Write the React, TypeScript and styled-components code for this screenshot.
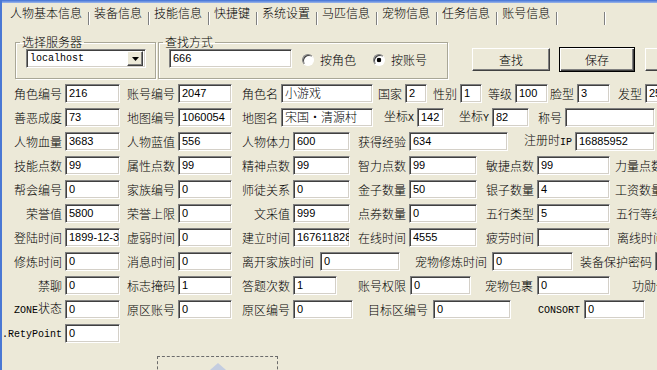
import React from 'react';
import styled, { createGlobalStyle } from 'styled-components';

const cjkFont = `"Noto Sans CJK SC", "Noto Sans", sans-serif`;
const monoFont = `"Liberation Mono", "Noto Sans CJK SC", monospace`;
const sansFont = `"Liberation Sans", "Noto Sans CJK SC", sans-serif`;

const GlobalStyle = createGlobalStyle`
    html, body {
        margin: 0;
        padding: 0;
        background: #ece9d8;
        overflow: hidden;
    }

    * {
        box-sizing: border-box;
    }
`;

type CellType = {
    label: React.ReactNode
    value?: string
    lw: number
    fw: number
    pad?: number
    cjk?: boolean
}

const Mono = styled.span`
    font-family: ${monoFont};
    font-size: 10px;
    font-weight: 400;
`;

const rows: CellType[][] = [
    [
        {label: '角色编号', value: '216', lw: 63, fw: 55},
        {label: '账号编号', value: '2047', lw: 58, fw: 54},
        {label: '角色名', value: '小游戏', lw: 49, fw: 92, cjk: true},
        {label: '国家', value: '2', lw: 32, fw: 22},
        {label: '性别', value: '1', lw: 33, fw: 22},
        {label: '等级', value: '100', lw: 33, fw: 33},
        {label: '脸型', value: '3', lw: 29, fw: 33},
        {label: '发型', value: '25', lw: 35, fw: 55},
    ],
    [
        {label: '善恶成度', value: '73', lw: 63, fw: 55},
        {label: '地图编号', value: '1060054', lw: 58, fw: 54},
        {label: '地图名', value: '宋国•清源村', lw: 49, fw: 92, cjk: true},
        {label: <>坐标<Mono>X</Mono></>, value: '142', lw: 44, fw: 27},
        {label: <>坐标<Mono>Y</Mono></>, value: '82', lw: 48, fw: 37},
        {label: '称号', value: '', lw: 36, fw: 90},
    ],
    [
        {label: '人物血量', value: '3683', lw: 63, fw: 55},
        {label: '人物蓝值', value: '556', lw: 58, fw: 54},
        {label: '人物体力', value: '600', lw: 61, fw: 57},
        {label: '获得经验', value: '634', lw: 59, fw: 99},
        {label: <>注册时<Mono>IP</Mono></>, value: '16885952', lw: 67, fw: 80},
    ],
    [
        {label: '技能点数', value: '99', lw: 63, fw: 55},
        {label: '属性点数', value: '99', lw: 58, fw: 54},
        {label: '精神点数', value: '99', lw: 61, fw: 57},
        {label: '智力点数', value: '99', lw: 59, fw: 68},
        {label: '敏捷点数', value: '99', lw: 60, fw: 73},
        {label: '力量点数', value: '99', lw: 56, fw: 60},
    ],
    [
        {label: '帮会编号', value: '0', lw: 63, fw: 55},
        {label: '家族编号', value: '0', lw: 58, fw: 54},
        {label: '师徒关系', value: '0', lw: 61, fw: 57},
        {label: '金子数量', value: '50', lw: 59, fw: 68},
        {label: '银子数量', value: '4', lw: 60, fw: 73},
        {label: '工资数量', value: '0', lw: 56, fw: 60},
    ],
    [
        {label: '荣誉值', value: '5800', lw: 63, fw: 55},
        {label: '荣誉上限', value: '0', lw: 58, fw: 54},
        {label: '文采值', value: '999', lw: 61, fw: 57},
        {label: '点券数量', value: '0', lw: 59, fw: 68},
        {label: '五行类型', value: '5', lw: 60, fw: 73},
        {label: '五行等级', value: '0', lw: 57, fw: 60},
    ],
    [
        {label: '登陆时间', value: '1899-12-30', lw: 63, fw: 55},
        {label: '虚弱时间', value: '0', lw: 58, fw: 54},
        {label: '建立时间', value: '1676118282', lw: 61, fw: 57},
        {label: '在线时间', value: '4555', lw: 59, fw: 68},
        {label: '疲劳时间', value: '', lw: 60, fw: 73},
        {label: '离线时间', value: '', lw: 58, fw: 60},
    ],
    [
        {label: '修炼时间', value: '0', lw: 63, fw: 55},
        {label: '消息时间', value: '0', lw: 58, fw: 54},
        {label: '离开家族时间', value: '0', lw: 88, fw: 80, pad: 6},
        {label: '宠物修炼时间', value: '0', lw: 92, fw: 81, pad: 5},
        {label: '装备保护密码', value: '', lw: 82, fw: 60},
    ],
    [
        {label: '禁聊', value: '0', lw: 63, fw: 55},
        {label: '标志掩码', value: '1', lw: 58, fw: 54},
        {label: '答题次数', value: '1', lw: 61, fw: 44},
        {label: '账号权限', value: '0', lw: 73, fw: 61, pad: 4},
        {label: '宠物包裹', value: '0', lw: 66, fw: 73, pad: 4},
        {label: '功勋值', value: '', lw: 61, fw: 60},
    ],
    [
        {label: <><Mono>ZONE</Mono>状态</>, value: '0', lw: 63, fw: 55},
        {label: '原区账号', value: '0', lw: 58, fw: 54},
        {label: '原区编号', value: '0', lw: 61, fw: 60},
        {label: '目标区编号', value: '0', lw: 80, fw: 78, pad: 5},
        {label: <Mono>CONSORT</Mono>, value: '0', lw: 73, fw: 61, pad: 4},
    ],
    [
        {label: <Mono>.RetyPoint</Mono>, value: '0', lw: 63, fw: 55},
    ],
];

const tabs = ['人物基本信息', '装备信息', '技能信息', '快捷键', '系统设置', '马匹信息', '宠物信息', '任务信息', '账号信息', ''];

export default function App() {
    return (
        <>
            <GlobalStyle/>
            <Window>
                <TitleEdge/>
                <TabBar>
                    {tabs.map((t, i) => (
                        <React.Fragment key={i}>
                            <Tab $first={i === 0}>{t}</Tab>
                            <TabSeparator/>
                        </React.Fragment>
                    ))}
                </TabBar>

                <TopArea>
                    <Group $width={141}>
                        <Legend>选择服务器</Legend>
                        <Select>
                            <SelectText>localhost</SelectText>
                            <DropButton>
                                <svg width="7" height="4" viewBox="0 0 7 4">
                                    <polygon points="0,0 7,0 3.5,4" fill="#000"/>
                                </svg>
                            </DropButton>
                        </Select>
                    </Group>

                    <Group $width={290}>
                        <Legend>查找方式</Legend>
                        <SearchLine>
                            <Edit>666</Edit>
                            <RadioItem $ml={10}>
                                <RadioDot/>
                                <RadioText>按角色</RadioText>
                            </RadioItem>
                            <RadioItem $ml={17}>
                                <RadioDot $checked/>
                                <RadioText>按账号</RadioText>
                            </RadioItem>
                        </SearchLine>
                    </Group>

                    <Button $ml={22} $w={78}>查找</Button>
                    <Button $ml={9} $w={76} $default>保存</Button>
                    <Button $ml={10} $w={75} $disabled>退出</Button>
                </TopArea>

                <Fields>
                    {rows.map((row, r) => (
                        <Row key={r}>
                            {row.map((c, i) => (
                                <React.Fragment key={i}>
                                    <Label $w={c.lw} $pad={c.pad ?? 3}>{c.label}</Label>
                                    <Field $w={c.fw} $cjk={c.cjk}>{c.value}</Field>
                                </React.Fragment>
                            ))}
                        </Row>
                    ))}
                </Fields>

                <PictureBox>
                    <svg width="119" height="20" viewBox="0 0 119 20">
                        <polygon points="60,6 76,20 44,20" fill="#c4cde0"/>
                    </svg>
                </PictureBox>
            </Window>
        </>
    );
}

const Window = styled.div`
    width: 657px;
    height: 370px;
    overflow: hidden;
    background: #ece9d8;
    border-left: 2px solid #4a78d4;
    font-family: ${cjkFont};
    font-size: 12px;
    font-weight: 300;
    color: #000;
`;

const TitleEdge = styled.div`
    height: 3px;
    background: linear-gradient(#3d6fd6, #9db7ea);
`;

const TabBar = styled.div`
    display: flex;
    height: 22px;
    white-space: nowrap;
`;

const Tab = styled.div<{ $first?: boolean }>`
    flex-shrink: 0;
    min-width: ${p => (p.$first ? 0 : 46)}px;
    padding: 3px 6px 0 ${p => (p.$first ? 8 : 4)}px;
    line-height: 14px;
`;

const TabSeparator = styled.div`
    flex-shrink: 0;
    align-self: flex-end;
    width: 2px;
    height: 13px;
    border-left: 1px solid #808080;
    border-right: 1px solid #fff;
`;

const TopArea = styled.div`
    display: flex;
    align-items: flex-start;
    margin-top: 10px;
    padding-left: 13px;
    white-space: nowrap;
`;

const Group = styled.fieldset<{ $width: number }>`
    flex-shrink: 0;
    width: ${p => p.$width}px;
    height: 44px;
    margin: 0 2px 0 0;
    padding: 0 0 0 10px;
    border: 1px solid #a9a797;
    box-shadow: 1px 1px 0 #fff, inset 1px 1px 0 #fff;
`;

const Legend = styled.legend`
    margin-left: -6px;
    padding: 0 2px;
    line-height: 14px;
    font-size: 12px;
`;

const sunken = `
    background: #fff;
    border: 1px solid;
    border-color: #808080 #fff #fff #808080;
    box-shadow: inset 1px 1px 0 #404040, inset -1px -1px 0 #d4d0c8;
`;

const Select = styled.div`
    ${sunken};
    display: flex;
    align-items: center;
    width: 120px;
    height: 19px;
    padding: 0 2px 0 3px;
`;

const SelectText = styled.span`
    flex: 1;
    font-family: ${monoFont};
    font-size: 10px;
    font-weight: 400;
    line-height: 15px;
`;

const DropButton = styled.div`
    display: flex;
    align-items: center;
    justify-content: center;
    width: 16px;
    height: 15px;
    background: #ece9d8;
    border: 1px solid;
    border-color: #fff #404040 #404040 #fff;
    box-shadow: inset -1px -1px 0 #808080;
`;

const SearchLine = styled.div`
    display: flex;
    align-items: center;
`;

const Edit = styled.div`
    ${sunken};
    width: 123px;
    height: 19px;
    padding-left: 3px;
    font-family: ${sansFont};
    font-size: 11px;
    font-weight: 400;
    line-height: 16px;
`;

const RadioItem = styled.div<{ $ml: number }>`
    display: flex;
    align-items: center;
    margin-left: ${p => p.$ml}px;
    margin-top: 3px;
`;

const RadioDot = styled.span<{ $checked?: boolean }>`
    width: 12px;
    height: 12px;
    border-radius: 50%;
    border: 1px solid;
    border-color: #808080 #fff #fff #808080;
    box-shadow: inset 1px 1px 0 #404040;
    background: ${p => (p.$checked ? 'radial-gradient(circle, #000 0 2px, #fff 2.6px)' : '#fff')};
`;

const RadioText = styled.span`
    margin-left: 6px;
    line-height: 14px;
`;

const Button = styled.div<{ $ml: number; $w: number; $default?: boolean; $disabled?: boolean }>`
    flex-shrink: 0;
    display: flex;
    align-items: center;
    justify-content: center;
    width: ${p => p.$w}px;
    height: ${p => (p.$default ? 25 : 23)}px;
    margin-left: ${p => p.$ml}px;
    margin-top: ${p => (p.$default ? 12 : 13)}px;
    background: #ece9d8;
    color: ${p => (p.$disabled ? '#aca899' : '#000')};
    border: 1px solid;
    border-color: ${p => (p.$default ? '#000' : '#fff #404040 #404040 #fff')};
    box-shadow: ${p => (p.$default
        ? 'inset 1px 1px 0 #fff, inset -1px -1px 0 #404040, inset -2px -2px 0 #808080'
        : 'inset -1px -1px 0 #808080')};
    line-height: 14px;
`;

const Fields = styled.div`
    display: flex;
    flex-direction: column;
    gap: 5px;
    margin-top: 5px;
`;

const Row = styled.div`
    display: flex;
    align-items: center;
    height: 19px;
    white-space: nowrap;
`;

const Label = styled.div<{ $w: number; $pad: number }>`
    flex-shrink: 0;
    width: ${p => p.$w}px;
    padding-right: ${p => p.$pad}px;
    text-align: right;
    line-height: 14px;
    direction: rtl;
    unicode-bidi: plaintext;
`;

const Field = styled.div<{ $w: number; $cjk?: boolean }>`
    ${sunken};
    flex-shrink: 0;
    width: ${p => p.$w}px;
    height: 19px;
    padding-left: 3px;
    overflow: hidden;
    font-family: ${p => (p.$cjk ? cjkFont : sansFont)};
    font-size: ${p => (p.$cjk ? 12 : 11)}px;
    font-weight: ${p => (p.$cjk ? 300 : 400)};
    line-height: 16px;
`;

const PictureBox = styled.div`
    width: 121px;
    height: 60px;
    margin: 13px 0 0 155px;
    border: 1px dashed #6b6b6b;
    overflow: hidden;
`;
